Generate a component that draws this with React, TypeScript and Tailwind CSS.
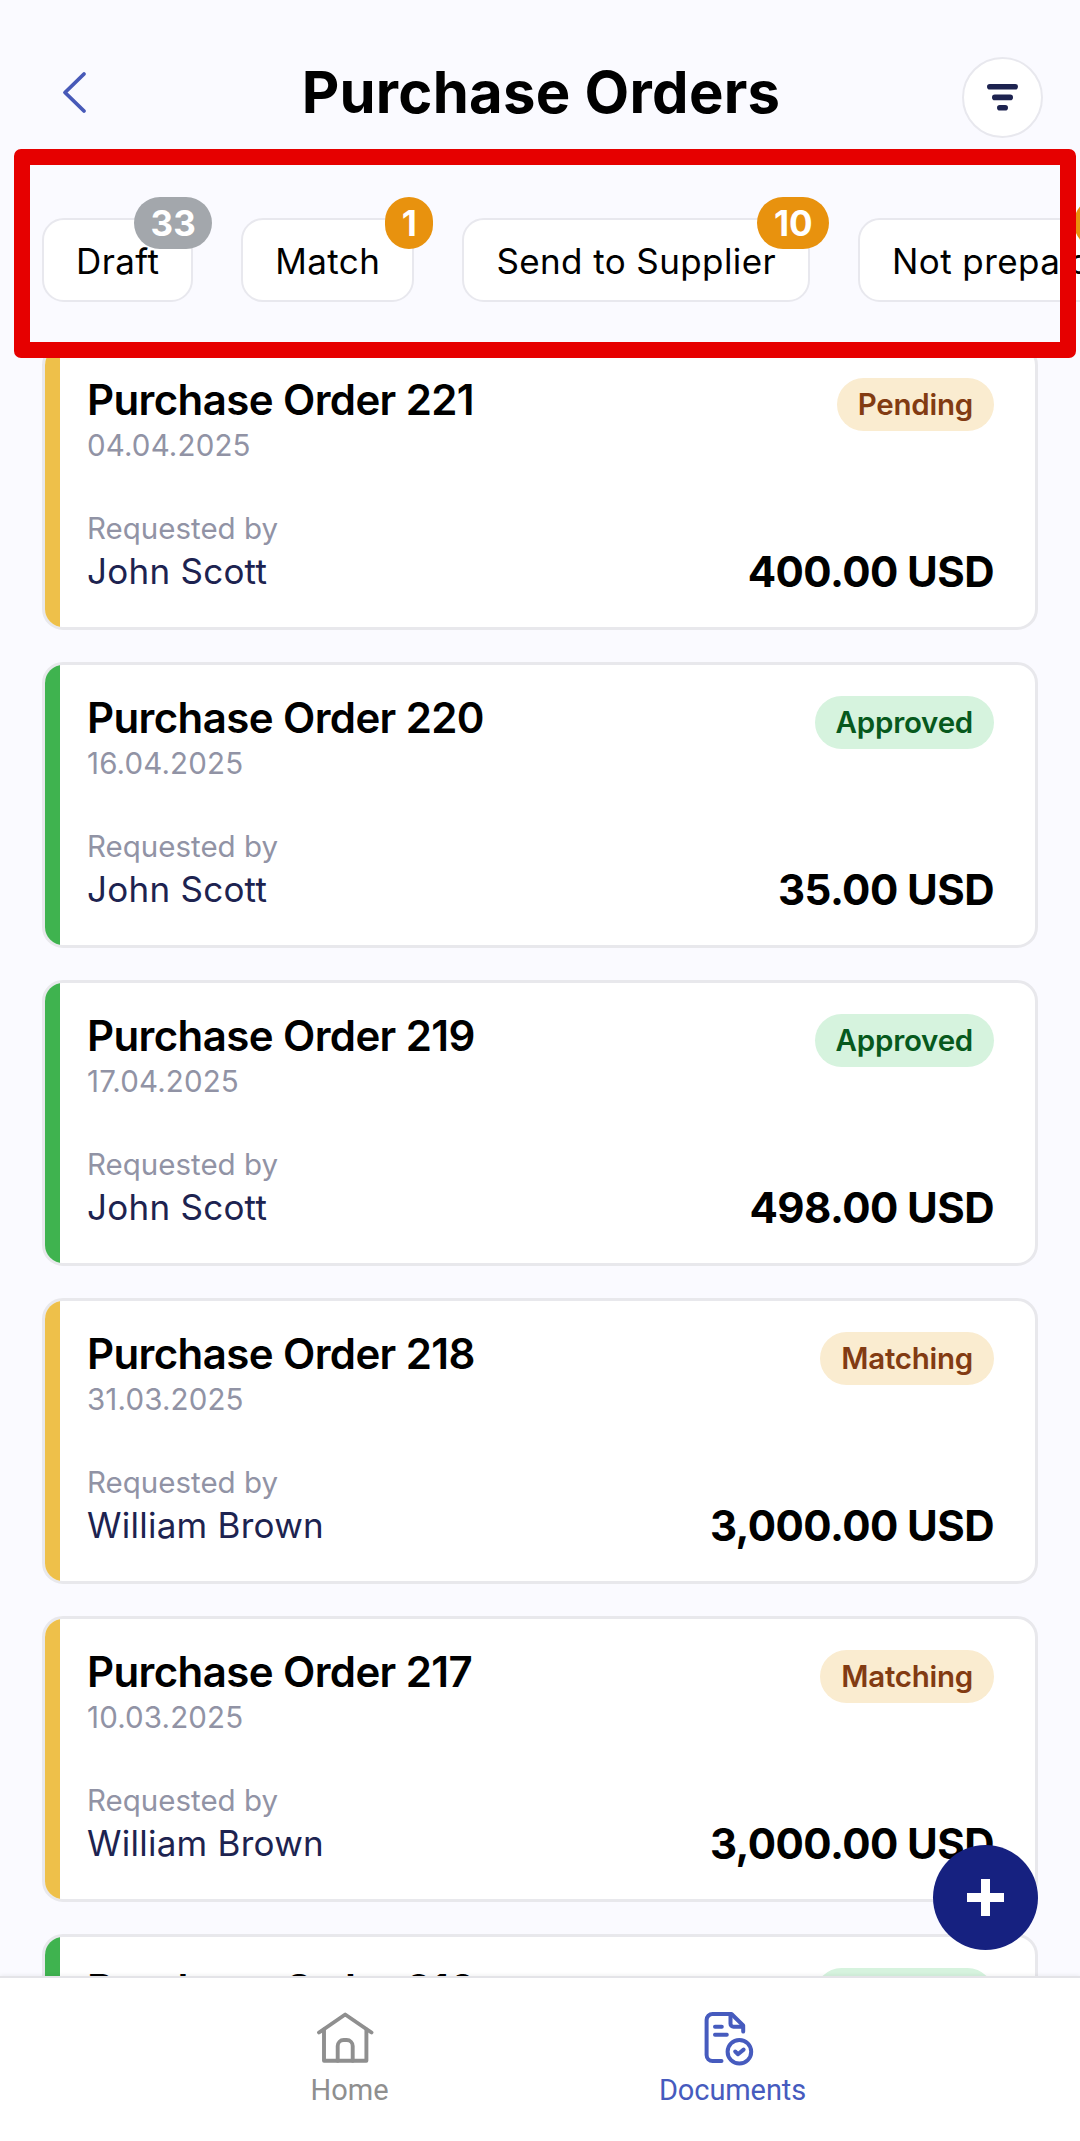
import clsx from "clsx";

type Status = "Pending" | "Approved" | "Matching";

interface Order {
  id: number;
  date: string;
  requestedBy: string;
  amount: string;
  status: Status;
}

interface Filter {
  label: string;
  count: number;
  muted?: boolean;
}

const filters: Filter[] = [
  { label: "Draft", count: 33, muted: true },
  { label: "Match", count: 1 },
  { label: "Send to Supplier", count: 10 },
  { label: "Not prepaid", count: 12 },
];

const orders: Order[] = [
  { id: 221, date: "04.04.2025", requestedBy: "John Scott", amount: "400.00 USD", status: "Pending" },
  { id: 220, date: "16.04.2025", requestedBy: "John Scott", amount: "35.00 USD", status: "Approved" },
  { id: 219, date: "17.04.2025", requestedBy: "John Scott", amount: "498.00 USD", status: "Approved" },
  { id: 218, date: "31.03.2025", requestedBy: "William Brown", amount: "3,000.00 USD", status: "Matching" },
  { id: 217, date: "10.03.2025", requestedBy: "William Brown", amount: "3,000.00 USD", status: "Matching" },
  { id: 216, date: "10.03.2025", requestedBy: "William Brown", amount: "3,000.00 USD", status: "Approved" },
];

function Header() {
  return (
    <header className="h-[149px] shrink-0 flex items-start justify-between pl-[62px] pr-[37px]">
      <svg className="mt-[70px] w-[26px] h-[45px]" viewBox="0 0 26 45" fill="none" stroke="#4759b8" strokeWidth="3.8" strokeLinecap="round" strokeLinejoin="round">
        <path d="M22 4 3 22.5 22 41" />
      </svg>
      <h1 className="mt-[57px] ml-[32px] text-[58px] leading-[70px] tracking-[0.27px] font-bold whitespace-nowrap">Purchase Orders</h1>
      <button className="mt-[57px] size-[81px] rounded-full border-2 border-[#e8e8ee] bg-white flex items-center justify-center">
        <svg className="w-[31px] h-[28px]" viewBox="0 0 31 28" fill="#1d2350">
          <rect x="0" y="0" width="31" height="5.6" rx="2.8" />
          <rect x="5" y="10.6" width="21" height="5.6" rx="2.8" />
          <rect x="10" y="21" width="11" height="5.6" rx="2.8" />
        </svg>
      </button>
    </header>
  );
}

function FilterChip({ label, count, muted }: Filter) {
  return (
    <div className="relative h-[84px] shrink-0 px-[32px] rounded-[22px] border-2 border-[#e8e8ee] bg-white flex items-center">
      <span className="mt-[2px] text-[35px] leading-[42px] tracking-[0.4px] whitespace-nowrap">{label}</span>
      <span
        className={clsx(
          "absolute -top-[23px] -right-[21px] h-[52px] px-[16.5px] rounded-full flex items-center text-[35px] font-bold text-white",
          muted ? "bg-[#a3a7ac]" : "bg-[#e8920e]"
        )}
      >
        {count}
      </span>
    </div>
  );
}

function OrderCard({ order }: { order: Order }) {
  const approved = order.status === "Approved";
  return (
    <div className="h-[286px] shrink-0 rounded-[21px] border-[3px] border-[#e8e8ec] bg-white overflow-hidden flex">
      <div className={clsx("w-[15px] shrink-0", approved ? "bg-[#3fb34f]" : "bg-[#eec04a]")} />
      <div className="flex-1 flex justify-between pl-[27px] pr-[41px]">
        <div>
          <div className="mt-[27px] text-[42px] leading-[51px] tracking-[-0.6px] font-semibold">Purchase Order {order.id}</div>
          <div className="mt-[2px] text-[29.5px] leading-[36px] tracking-[0.15px] text-[#9193a5]">{order.date}</div>
          <div className="mt-[47px] text-[29.5px] leading-[36px] text-[#9193a5]">Requested by</div>
          <div className="mt-[4px] text-[35px] leading-[42px] tracking-[0.25px] text-[#1d2350]">{order.requestedBy}</div>
        </div>
        <div className="flex flex-col items-end">
          <div
            className={clsx(
              "mt-[31px] h-[53px] px-[21px] rounded-full flex items-center text-[29.5px] tracking-[-0.25px] font-semibold",
              approved ? "bg-[#d6f3de] text-[#07591d]" : "bg-[#faecd0] text-[#823b12]"
            )}
          >
            {order.status}
          </div>
          <div className="mt-[115px] text-[42px] leading-[51px] tracking-[-0.55px] font-bold">{order.amount}</div>
        </div>
      </div>
    </div>
  );
}

function HomeIcon() {
  return (
    <svg className="w-[58px] h-[54px]" viewBox="0 0 58 54" fill="none" stroke="#8f8f8f" strokeWidth="3.9" strokeLinecap="round" strokeLinejoin="round">
      <path d="M3 20.5 29.2 2.5 55.5 20.5" />
      <path d="M8 17.5V48.8H50.4V17.5" />
      <path d="M21.7 48.8V34a6 6 0 0 1 6-6h3a6 6 0 0 1 6 6v14.8" />
    </svg>
  );
}

function DocumentsIcon() {
  return (
    <svg className="w-[50px] h-[55px]" viewBox="0 0 50 55" fill="none" stroke="#465bbe" strokeWidth="4" strokeLinecap="round" strokeLinejoin="round">
      <path d="M17.5 49H8.6a6 6 0 0 1-6-6V8a6 6 0 0 1 6-6H27.5L39.2 13.5V19.5" />
      <path d="M26.5 2.5V11.7a3 3 0 0 0 3 3H38.5" />
      <path d="M11 14.8H17.8M11 22.7H22.8" />
      <circle cx="35.4" cy="39.8" r="11.8" />
      <path d="M31.2 39.5 34 42.2 39.6 37.6" />
    </svg>
  );
}

export default function App() {
  return (
    <div className="relative w-[1080px] h-[2141px] overflow-hidden bg-[#fafaff] text-black font-[Inter,sans-serif] flex flex-col">
      <Header />

      <div className="h-[195px] shrink-0 flex items-start gap-[48px] pt-[69px] pl-[42px]">
        {filters.map((f) => (
          <FilterChip key={f.label} {...f} />
        ))}
      </div>

      <main className="flex-1 min-h-0 overflow-hidden px-[42px] flex flex-col gap-[32px]">
        {orders.map((o) => (
          <OrderCard key={o.id} order={o} />
        ))}
      </main>

      <nav className="h-[165px] shrink-0 border-t-2 border-[#e4e4e8] bg-white shadow-[0_-1px_4px_rgba(0,0,0,0.06)] flex text-[29px] font-[Roboto,sans-serif]">
        <div className="ml-[220px] w-[259px] flex flex-col items-center text-[#8f8f8f]">
          <div className="mt-[34px] h-[55px] -ml-[10px]">
            <HomeIcon />
          </div>
          <span className="mt-[5px] leading-[36px]">Home</span>
        </div>
        <div className="ml-[124px] w-[259px] flex flex-col items-center text-[#465bbe]">
          <div className="mt-[34px] h-[55px] -ml-[7px]">
            <DocumentsIcon />
          </div>
          <span className="mt-[5px] leading-[36px] tracking-[-0.1px]">Documents</span>
        </div>
      </nav>

      {/* floating add button */}
      <button className="absolute right-[42px] top-[1845px] size-[105px] rounded-full bg-[#162180] flex items-center justify-center">
        <svg className="size-[37px]" viewBox="0 0 37 37" stroke="#fff" strokeWidth="9">
          <path d="M18.5 0V37M0 18.5H37" />
        </svg>
      </button>

      {/* highlight frame around the filter row */}
      <div className="absolute left-[14px] top-[149px] w-[1062px] h-[209px] rounded-[7px] border-16 border-[#e60000]" />
    </div>
  );
}
